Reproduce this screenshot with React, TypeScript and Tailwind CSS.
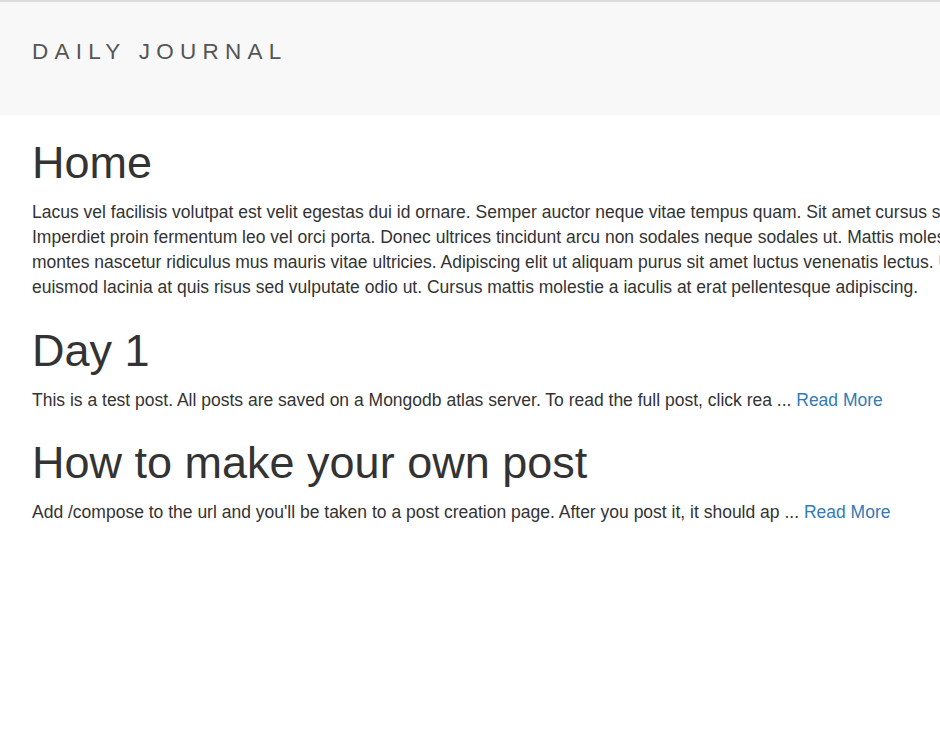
const homeLines = [
  "Lacus vel facilisis volutpat est velit egestas dui id ornare. Semper auctor neque vitae tempus quam. Sit amet cursus sit amet dictum sit amet justo. Viverra tellus in hac habitasse.",
  "Imperdiet proin fermentum leo vel orci porta. Donec ultrices tincidunt arcu non sodales neque sodales ut. Mattis molestie a iaculis at erat pellentesque adipiscing. Magnis dis parturient",
  "montes nascetur ridiculus mus mauris vitae ultricies. Adipiscing elit ut aliquam purus sit amet luctus venenatis lectus. Ultrices vitae auctor eu augue ut lectus arcu bibendum at. Odio",
  "euismod lacinia at quis risus sed vulputate odio ut. Cursus mattis molestie a iaculis at erat pellentesque adipiscing.",
];

const posts = [
  {
    title: "Day 1",
    excerpt: "This is a test post. All posts are saved on a Mongodb atlas server. To read the full post, click rea ...",
  },
  {
    title: "How to make your own post",
    excerpt: "Add /compose to the url and you'll be taken to a post creation page. After you post it, it should ap ...",
  },
];

export default function App() {
  return (
    <div className="min-h-screen w-full overflow-hidden bg-white text-[#333] font-['Liberation_Sans',Arial,sans-serif]">
      <div className="h-[2px] bg-[#dcdcdc]" />
      <nav className="flex h-[113px] items-center bg-[#f8f8f8] px-[32px] pb-[12px]">
        <a className="text-[22.5px] uppercase tracking-[6.25px] text-[#555] leading-none">Daily Journal</a>
      </nav>

      <div className="w-[2400px] px-[32px]">
        <h1 className="mt-[23px] mb-[12.5px] text-[45px] leading-[1.1]">Home</h1>
        <p className="mb-[12.5px] text-[17.5px] leading-[25px]">
          {homeLines.map((line, i) => (
            <span key={i} className="block whitespace-nowrap">{line}</span>
          ))}
        </p>

        {posts.map((post) => (
          <div key={post.title}>
            <h1 className="mt-[25.5px] mb-[12.5px] text-[45px] leading-[1.1]">{post.title}</h1>
            <p className="mb-[12.5px] text-[17.5px] leading-[25px] whitespace-nowrap">
              {post.excerpt} <a href="#" className="text-[#337ab7]">Read More</a>
            </p>
          </div>
        ))}
      </div>
    </div>
  );
}
